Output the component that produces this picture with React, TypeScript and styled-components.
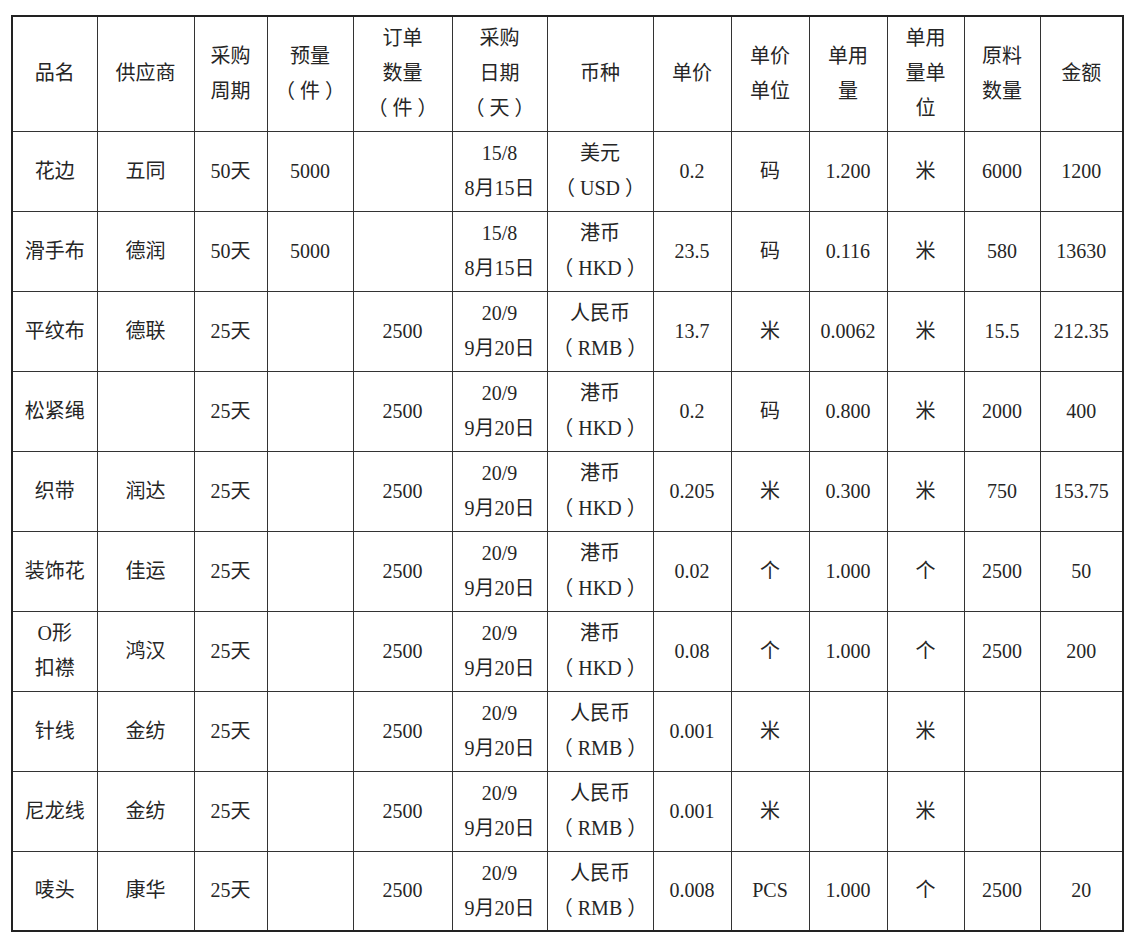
import styled, { createGlobalStyle } from "styled-components";

const GlobalStyle = createGlobalStyle`
    html, body {
        margin: 0;
        padding: 0;
        background: #fff;
    }
    body {
        font-family: "Liberation Serif", "Noto Sans CJK SC", serif;
        color: #222;
    }
`

const Page = styled.div`
    padding: 15px 0 0 11px;
`

const Table = styled.table`
    border-collapse: collapse;
    table-layout: fixed;
    width: 1112px;
    border: 2.5px solid #222;
    font-size: 20px;
`

const HeadRow = styled.tr`
    height: 115px;
`

const Row = styled.tr`
    height: 80px;
`

const Cell = styled.td`
    border: 1.5px solid #333;
    text-align: center;
    vertical-align: middle;
    padding: 0 2px;
    line-height: 35px;
    color: #262626;
    font-weight: 400;
`

const HeadCell = styled(Cell).attrs({ as: "th" })`
    font-weight: 400;
`

const LineText = styled.div`
    white-space: pre;
`

const widths = [85, 97, 73, 86, 99, 95, 106, 78, 78, 78, 77, 76, 83]

const headers: string[][] = [
    ["品名"],
    ["供应商"],
    ["采购", "周期"],
    ["预量", "（ 件 ）"],
    ["订单", "数量", "（ 件 ）"],
    ["采购", "日期", "（ 天 ）"],
    ["币种"],
    ["单价"],
    ["单价", "单位"],
    ["单用", "量"],
    ["单用", "量单", "位"],
    ["原料", "数量"],
    ["金额"],
]

const usd = ["美元", "（ USD ）"]
const hkd = ["港币", "（ HKD ）"]
const rmb = ["人民币", "（ RMB ）"]
const aug = ["15/8", "8月15日"]
const sep = ["20/9", "9月20日"]

const rows: string[][][] = [
    [["花边"], ["五同"], ["50天"], ["5000"], [""], aug, usd, ["0.2"], ["码"], ["1.200"], ["米"], ["6000"], ["1200"]],
    [["滑手布"], ["德润"], ["50天"], ["5000"], [""], aug, hkd, ["23.5"], ["码"], ["0.116"], ["米"], ["580"], ["13630"]],
    [["平纹布"], ["德联"], ["25天"], [""], ["2500"], sep, rmb, ["13.7"], ["米"], ["0.0062"], ["米"], ["15.5"], ["212.35"]],
    [["松紧绳"], [""], ["25天"], [""], ["2500"], sep, hkd, ["0.2"], ["码"], ["0.800"], ["米"], ["2000"], ["400"]],
    [["织带"], ["润达"], ["25天"], [""], ["2500"], sep, hkd, ["0.205"], ["米"], ["0.300"], ["米"], ["750"], ["153.75"]],
    [["装饰花"], ["佳运"], ["25天"], [""], ["2500"], sep, hkd, ["0.02"], ["个"], ["1.000"], ["个"], ["2500"], ["50"]],
    [["O形", "扣襟"], ["鸿汉"], ["25天"], [""], ["2500"], sep, hkd, ["0.08"], ["个"], ["1.000"], ["个"], ["2500"], ["200"]],
    [["针线"], ["金纺"], ["25天"], [""], ["2500"], sep, rmb, ["0.001"], ["米"], [""], ["米"], [""], [""]],
    [["尼龙线"], ["金纺"], ["25天"], [""], ["2500"], sep, rmb, ["0.001"], ["米"], [""], ["米"], [""], [""]],
    [["唛头"], ["康华"], ["25天"], [""], ["2500"], sep, rmb, ["0.008"], ["PCS"], ["1.000"], ["个"], ["2500"], ["20"]],
]

function Lines({ lines }: { lines: string[] }) {
    return (
        <>
            {lines.map((l, i) => <LineText key={i}>{l || "\u00a0"}</LineText>)}
        </>
    )
}

export default function App() {
    return (
        <Page>
            <GlobalStyle />
            <Table>
                <colgroup>
                    {widths.map((w, i) => <col key={i} style={{ width: w }} />)}
                </colgroup>
                <thead>
                    <HeadRow>
                        {headers.map((h, i) => <HeadCell key={i}><Lines lines={h} /></HeadCell>)}
                    </HeadRow>
                </thead>
                <tbody>
                    {rows.map((r, ri) => (
                        <Row key={ri}>
                            {r.map((c, ci) => <Cell key={ci}><Lines lines={c} /></Cell>)}
                        </Row>
                    ))}
                </tbody>
            </Table>
        </Page>
    )
}
